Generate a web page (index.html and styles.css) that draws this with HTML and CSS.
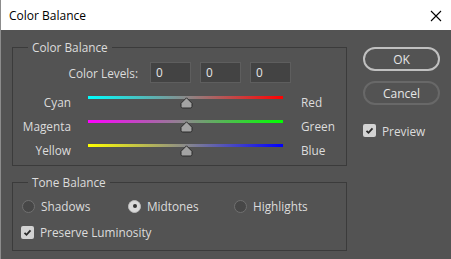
FILE: index.html
```html
<!DOCTYPE html>
<html>
<head>
    <title>Color Balance</title>
    <link rel="stylesheet" href="styles.css">
</head>
<body>
    <div class="window">
        <div class="titlebar">
            <span>Color Balance</span>
            <svg class="close" width="12" height="12" viewBox="0 0 12 12">
                <path d="M1 1 L11 11 M11 1 L1 11" stroke="#000" stroke-width="1.1" fill="none"/>
            </svg>
        </div>
        <div class="content">
            <div class="left">
                <div class="group balance">
                    <span class="group-title">Color Balance</span>
                    <div class="levels">
                        <span class="levels-label">Color Levels:</span>
                        <div class="field">0</div>
                        <div class="field">0</div>
                        <div class="field">0</div>
                    </div>
                    <div class="sliders">
                        <span class="name">Cyan</span>
                        <div class="track cyan-red"><svg class="thumb" width="13" height="12" viewBox="0 0 13 12"><path d="M6.5 0.8 L12 6.3 V9.3 Q12 11 10.3 11 H2.7 Q1 11 1 9.3 V6.3 Z" fill="#a3a3a3" stroke="#2b2b2b" stroke-width="1"/></svg></div>
                        <span class="end">Red</span>

                        <span class="name">Magenta</span>
                        <div class="track magenta-green"><svg class="thumb" width="13" height="12" viewBox="0 0 13 12"><path d="M6.5 0.8 L12 6.3 V9.3 Q12 11 10.3 11 H2.7 Q1 11 1 9.3 V6.3 Z" fill="#a3a3a3" stroke="#2b2b2b" stroke-width="1"/></svg></div>
                        <span class="end">Green</span>

                        <span class="name">Yellow</span>
                        <div class="track yellow-blue"><svg class="thumb" width="13" height="12" viewBox="0 0 13 12"><path d="M6.5 0.8 L12 6.3 V9.3 Q12 11 10.3 11 H2.7 Q1 11 1 9.3 V6.3 Z" fill="#a3a3a3" stroke="#2b2b2b" stroke-width="1"/></svg></div>
                        <span class="end">Blue</span>
                    </div>
                </div>

                <div class="group tone">
                    <span class="group-title">Tone Balance</span>
                    <div class="radios">
                        <div class="option"><span class="radio"></span>Shadows</div>
                        <div class="option"><span class="radio on"></span>Midtones</div>
                        <div class="option"><span class="radio"></span>Highlights</div>
                    </div>
                    <div class="option check-row"><span class="check"><svg width="13" height="13" viewBox="0 0 13 13"><path d="M3.5 6.8 L5.5 8.8 L9.5 4.3" stroke="#2a2a2a" stroke-width="1.8" fill="none"/></svg></span>Preserve Luminosity</div>
                </div>
            </div>

            <div class="right">
                <button class="btn ok">OK</button>
                <button class="btn cancel">Cancel</button>
                <div class="option preview"><span class="check"><svg width="13" height="13" viewBox="0 0 13 13"><path d="M3.5 6.8 L5.5 8.8 L9.5 4.3" stroke="#2a2a2a" stroke-width="1.8" fill="none"/></svg></span>Preview</div>
            </div>
        </div>
    </div>
</body>
</html>
```

FILE: styles.css
```css
body {
    margin: 0;
    font-family: "Open Sans", "Noto Sans", sans-serif;
    font-size: 11.8px;
    background: #535353;
}
.window {
    width: 451px;
    height: 259px;
    border-left: 1px solid #8c8c8c;
    box-sizing: border-box;
    display: flex;
    flex-direction: column;
}
.titlebar {
    height: 30px;
    background: #fff;
    color: #000;
    font-size: 12px;
    display: flex;
    align-items: center;
    justify-content: space-between;
    padding: 0 9px 0 8px;
}
.close {
    margin-top: 1px;
}
.content {
    flex: 1;
    background: #535353;
    color: #dcdcdc;
    display: flex;
    gap: 16px;
    padding: 17px 0 0 11px;
}
.left {
    width: 335px;
    display: flex;
    flex-direction: column;
    gap: 16px;
}
.group {
    border: 1px solid #3b3b3b;
    position: relative;
}
.group-title {
    position: absolute;
    top: -9px;
    left: 15px;
    padding: 0 4px;
    line-height: 16px;
    background: #535353;
}
.balance {
    padding-top: 14px;
    height: 103px;
}
.levels {
    display: flex;
    align-items: center;
    height: 21px;
}
.levels-label {
    width: 125px;
    text-align: right;
    margin-right: 12px;
}
.field {
    width: 41px;
    height: 21px;
    box-sizing: border-box;
    margin-right: 9px;
    background: #434343;
    border: 1px solid #5e5e5e;
    padding-left: 5px;
    line-height: 19px;
    color: #e6e6e6;
}
.sliders {
    display: grid;
    grid-template-columns: 58px 195px auto;
    grid-auto-rows: 13px;
    column-gap: 17px;
    row-gap: 11px;
    margin-top: 13px;
    align-items: center;
}
.name {
    text-align: right;
    line-height: 13px;
}
.end {
    line-height: 13px;
    margin-left: 1px;
}
.track {
    height: 13px;
    position: relative;
}
.track::before {
    content: "";
    position: absolute;
    left: 0;
    right: 0;
    top: 0;
    height: 3px;
    background: var(--grad);
}
.cyan-red { --grad: linear-gradient(to right, #00ffff, #8a8a8a, #ff0000); }
.magenta-green { --grad: linear-gradient(to right, #ff00ff, #8a8a8a, #00ff00); }
.yellow-blue { --grad: linear-gradient(to right, #ffff00, #8a8a8a, #0000ff); }
.thumb {
    position: absolute;
    left: 92px;
    top: 1px;
}
.tone {
    padding: 15px 0 10px 9px;
    display: flex;
    flex-direction: column;
    gap: 10px;
}
.radios {
    display: flex;
}
.option {
    display: flex;
    align-items: center;
    height: 16px;
}
.radios .option {
    width: 106px;
}
.radio {
    width: 13px;
    height: 13px;
    box-sizing: border-box;
    border-radius: 50%;
    border: 1px solid #707070;
    background: #474747;
    margin-right: 6px;
}
.radio.on {
    background: #dadada;
    border-color: #bdbdbd;
    position: relative;
}
.radio.on::after {
    content: "";
    position: absolute;
    left: 3.5px;
    top: 3.5px;
    width: 4px;
    height: 4px;
    border-radius: 50%;
    background: #333;
}
.check {
    width: 13px;
    height: 13px;
    border-radius: 2px;
    background: #d3d3d3;
    margin-right: 6px;
    display: flex;
}
.check-row {
    margin-left: -1px;
}
.right {
    width: 77px;
    display: flex;
    flex-direction: column;
    gap: 10px;
}
.btn {
    height: 24px;
    border-radius: 12px;
    background: transparent;
    color: #e6e6e6;
    font-family: "Open Sans", "Noto Sans", sans-serif;
    font-size: 12px;
    padding: 0;
}
.ok {
    border: 2px solid #c0c0c0;
}
.cancel {
    border: 2px solid #686868;
}
.preview {
    margin-top: 9px;
    height: 13px;
}
```
